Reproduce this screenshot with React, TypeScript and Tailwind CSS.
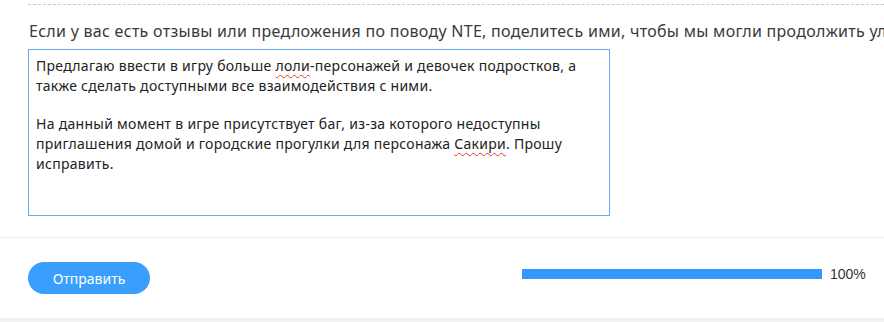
import React from "react";

export default function App() {
  const sq = "underline decoration-wavy decoration-[#e53935] decoration-1 underline-offset-[3px]";
  return (
    <div className="w-[884px] h-[322px] bg-white overflow-hidden flex flex-col" style={{ fontFamily: '"Noto Sans", "Open Sans", sans-serif' }}>
      <div className="pl-[28px] pt-[4px]">
        <div className="border-t border-dashed border-[#c8c8c8]" />
      </div>
      <div className="pl-[29px] mt-[14px] text-[16px] leading-[24px] tracking-[0.28px] text-[#3a3a3a] whitespace-nowrap overflow-hidden">
        Если у вас есть отзывы или предложения по поводу NTE, поделитесь ими, чтобы мы могли продолжить улучшать игру.
      </div>
      <div className="pl-[28px] mt-[6px]">
        <div className="w-[582px] h-[167px] border border-[#66aaf0] pl-[7px] pt-[6px] pr-[8px] text-[14px] leading-[20px] tracking-[0.28px] text-[#222]">
          <p>
            Предлагаю ввести в игру больше <span className={sq}>лоли</span>-персонажей и девочек подростков, а
            <br />
            также сделать доступными все взаимодействия с ними.
          </p>
          <p className="mt-[18px]">
            На данный момент в игре присутствует баг, из-за которого недоступны
            <br />
            приглашения домой и городские прогулки для персонажа <span className={sq}>Сакири</span>. Прошу
            <br />
            исправить.
          </p>
        </div>
      </div>
      <div className="mt-[21px] border-t border-[#ececec]" />
      <div className="flex items-center pl-[28px] mt-[24px]">
        <button className="w-[122px] h-[32px] rounded-full bg-[#389ffe] text-white text-[14px]">Отправить</button>
        <div className="ml-[372px] flex items-center -mt-[8px]">
          <div className="w-[300px] h-[10px] bg-[#3399ff]" />
          <span className="ml-[8px] text-[14px] text-[#333]" style={{ fontFamily: '"Liberation Sans", Arial, sans-serif' }}>100%</span>
        </div>
      </div>
      <div className="flex-1" />
      <div className="h-[4px] bg-[#f2f2f2]" />
    </div>
  );
}
